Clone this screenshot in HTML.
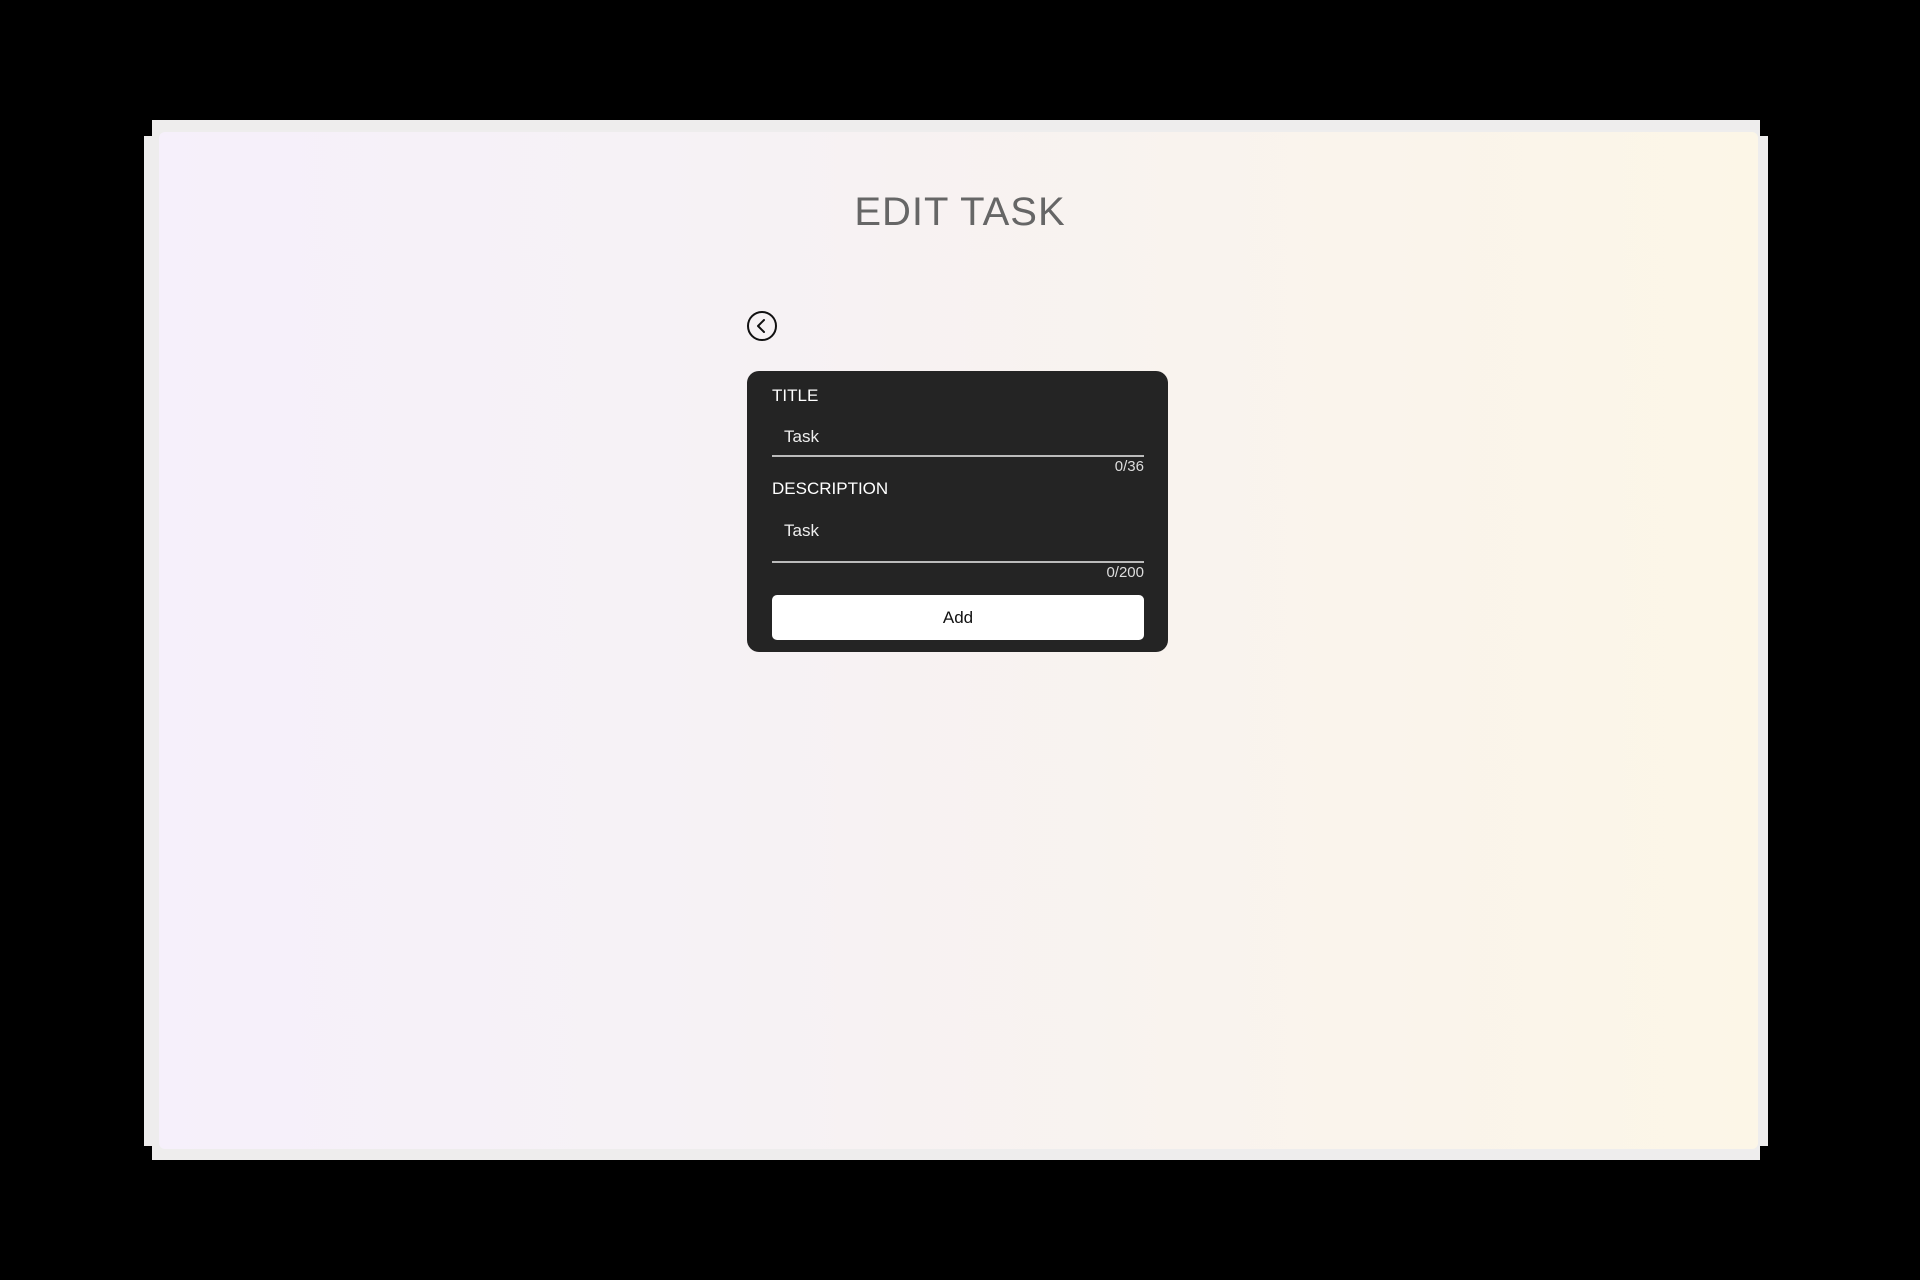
<!DOCTYPE html>
<html><head><style>
*{margin:0;padding:0;box-sizing:border-box}
body{width:1920px;height:1280px;background:#000;position:relative;overflow:hidden;font-family:"Liberation Sans",sans-serif}
.f1{position:absolute;left:152px;top:120px;width:1608px;height:1040px;background:#eeeded}
.f2{position:absolute;left:144px;top:136px;width:1624px;height:1010px;background:#eeeded}
.in{position:absolute;left:159px;top:132px;width:1599px;height:1017px;background:linear-gradient(90deg,#f6f0fb 0%,#f6f2f5 35%,#f9f3ee 65%,#fcf6e7 100%);border-radius:6px}
.title{position:absolute;left:0;width:1920px;top:190px;text-align:center;font-size:40px;color:#666;letter-spacing:1px}
.card{position:absolute;left:747px;top:371px;width:421px;height:281px;background:#242424;border-radius:12px;color:#fff}
.lbl{position:absolute;left:25px;font-size:17px}
.val{position:absolute;left:37px;font-size:17px;color:#eee}
.line{position:absolute;left:25px;width:372px;height:2px;background:#bbb}
.cnt{position:absolute;right:24px;font-size:15px;color:#ddd}
.btn{position:absolute;left:25px;top:224px;width:372px;height:45px;background:#fff;border-radius:5px;color:#111;font-size:17px;text-align:center;line-height:45px}
</style></head><body>
<div class="f1"></div><div class="f2"></div><div class="in"></div>
<div class="title">EDIT TASK</div>
<svg style="position:absolute;left:746px;top:310px" width="32" height="32" viewBox="0 0 32 32"><circle cx="16" cy="16" r="14" fill="none" stroke="#111" stroke-width="2"/><path d="M18 10 L12 16 L18 22" fill="none" stroke="#111" stroke-width="2" stroke-linecap="round" stroke-linejoin="round"/></svg>
<div class="card">
<div class="lbl" style="top:15px">TITLE</div>
<div class="val" style="top:56px">Task</div>
<div class="line" style="top:84px"></div>
<div class="cnt" style="top:87px">0/36</div>
<div class="lbl" style="top:108px">DESCRIPTION</div>
<div class="val" style="top:150px">Task</div>
<div class="line" style="top:190px"></div>
<div class="cnt" style="top:193px">0/200</div>
<div class="btn">Add</div>
</div>
</body></html>
